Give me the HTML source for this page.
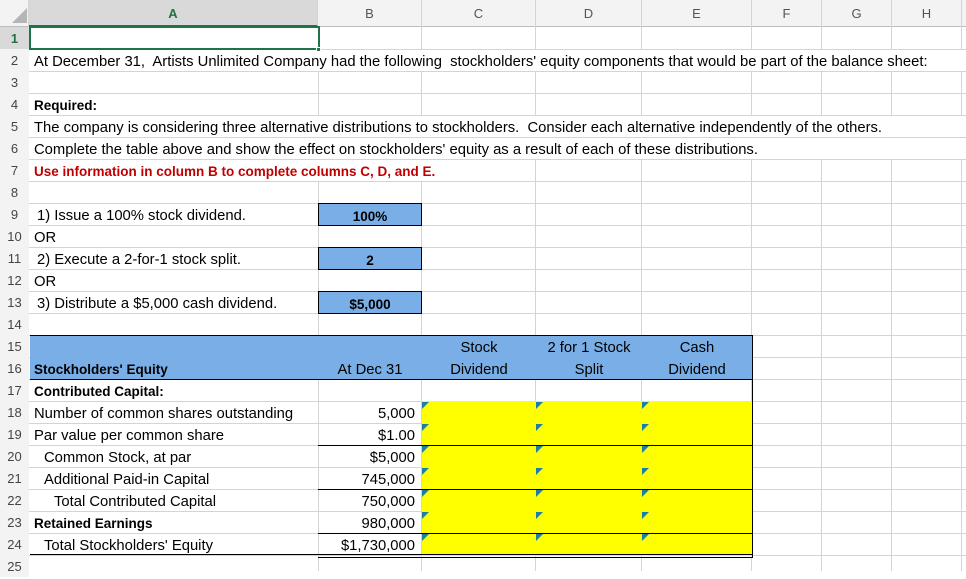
<!DOCTYPE html>
<html><head><meta charset="utf-8"><style>
*{margin:0;padding:0;box-sizing:border-box}
body{width:966px;height:571px;overflow:hidden;background:#fff;position:relative;font-family:"Liberation Sans",sans-serif;font-size:14.8px;color:#000}
.a{position:absolute}
.hl{position:absolute;left:29px;width:937px;height:1px;background:#d4d4d4}
.vl{position:absolute;top:27px;width:1px;height:544px;background:#d4d4d4}
.rn{position:absolute;left:0;width:29px;height:22px;line-height:24px;text-align:center;color:#444;font-size:13px;background:#f3f3f3}
.ch{position:absolute;top:0;height:27px;line-height:28px;text-align:center;color:#555;font-size:13px;border-right:1px solid #d4d4d4}
.t{position:absolute;height:22px;line-height:26px;white-space:nowrap}
.b{font-weight:bold;font-size:13.5px}
.r{text-align:right}
.c{text-align:center}
.tri{position:absolute;width:0;height:0;border-top:7px solid #1b7fa8;border-right:7px solid transparent}
</style></head><body>
<div class="a" style="left:0;top:0;width:966px;height:27px;background:#f3f3f3;border-bottom:1px solid #bdbdbd"></div>
<div class="a" style="left:0;top:0;width:29px;height:27px;border-right:1px solid #d4d4d4"></div>
<div class="a" style="left:12px;top:8px;width:0;height:0;border-left:15px solid transparent;border-bottom:15px solid #b5b5b5"></div>
<div class="ch" style="left:29px;width:289px;background:#d9d9d9;color:#217346;font-weight:bold;border-bottom:2px solid #217346">A</div>
<div class="ch" style="left:318px;width:104px">B</div>
<div class="ch" style="left:422px;width:114px">C</div>
<div class="ch" style="left:536px;width:106px">D</div>
<div class="ch" style="left:642px;width:110px">E</div>
<div class="ch" style="left:752px;width:70px">F</div>
<div class="ch" style="left:822px;width:70px">G</div>
<div class="ch" style="left:892px;width:70px">H</div>
<div class="a" style="left:0;top:27px;width:29px;height:544px;background:#f3f3f3;border-right:1px solid #bdbdbd"></div>
<div class="vl" style="left:318px"></div><div class="vl" style="left:421px"></div><div class="vl" style="left:535px"></div><div class="vl" style="left:641px"></div><div class="vl" style="left:751px"></div><div class="vl" style="left:821px"></div><div class="vl" style="left:891px"></div><div class="vl" style="left:961px"></div>
<div class="hl" style="top:49px"></div><div class="hl" style="top:71px"></div><div class="hl" style="top:93px"></div><div class="hl" style="top:115px"></div><div class="hl" style="top:137px"></div><div class="hl" style="top:159px"></div><div class="hl" style="top:181px"></div><div class="hl" style="top:203px"></div><div class="hl" style="top:225px"></div><div class="hl" style="top:247px"></div><div class="hl" style="top:269px"></div><div class="hl" style="top:291px"></div><div class="hl" style="top:313px"></div><div class="hl" style="top:335px"></div><div class="hl" style="top:357px"></div><div class="hl" style="top:379px"></div><div class="hl" style="top:401px"></div><div class="hl" style="top:423px"></div><div class="hl" style="top:445px"></div><div class="hl" style="top:467px"></div><div class="hl" style="top:489px"></div><div class="hl" style="top:511px"></div><div class="hl" style="top:533px"></div><div class="hl" style="top:555px"></div>
<div class="a" style="left:30px;top:50px;width:936px;height:21px;background:#fff"></div>
<div class="a" style="left:30px;top:116px;width:936px;height:21px;background:#fff"></div>
<div class="a" style="left:30px;top:138px;width:936px;height:21px;background:#fff"></div>
<div class="a" style="left:30px;top:160px;width:420px;height:21px;background:#fff"></div>
<div class="rn" style="top:27px;background:#d9d9d9;color:#217346;font-weight:bold">1</div>
<div class="rn" style="top:49px">2</div><div class="rn" style="top:71px">3</div><div class="rn" style="top:93px">4</div><div class="rn" style="top:115px">5</div><div class="rn" style="top:137px">6</div><div class="rn" style="top:159px">7</div><div class="rn" style="top:181px">8</div><div class="rn" style="top:203px">9</div><div class="rn" style="top:225px">10</div><div class="rn" style="top:247px">11</div><div class="rn" style="top:269px">12</div><div class="rn" style="top:291px">13</div><div class="rn" style="top:313px">14</div><div class="rn" style="top:335px">15</div><div class="rn" style="top:357px">16</div><div class="rn" style="top:379px">17</div><div class="rn" style="top:401px">18</div><div class="rn" style="top:423px">19</div><div class="rn" style="top:445px">20</div><div class="rn" style="top:467px">21</div><div class="rn" style="top:489px">22</div><div class="rn" style="top:511px">23</div><div class="rn" style="top:533px">24</div><div class="rn" style="top:555px">25</div>
<div class="a" style="left:29px;top:26px;width:291px;height:24px;border:2px solid #217346"></div>
<div class="a" style="left:316px;top:47px;width:5px;height:5px;background:#217346;border:1px solid #fff"></div>
<div class="t" style="left:34px;top:49px">At December 31,&nbsp; Artists Unlimited Company had the following&nbsp; stockholders' equity components that would be part of the balance sheet:</div>
<div class="t b" style="left:34px;top:93px">Required:</div>
<div class="t" style="left:34px;top:115px">The company is considering three alternative distributions to stockholders.&nbsp; Consider each alternative independently of the others.</div>
<div class="t" style="left:34px;top:137px">Complete the table above and show the effect on stockholders' equity as a result of each of these distributions.</div>
<div class="t b" style="left:34px;top:159px;color:#c00000">Use information in column B to complete columns C, D, and E.</div>
<div class="t" style="left:37px;top:203px">1) Issue a 100% stock dividend.</div>
<div class="t" style="left:34px;top:225px">OR</div>
<div class="t" style="left:37px;top:247px">2) Execute a 2-for-1 stock split.</div>
<div class="t" style="left:34px;top:269px">OR</div>
<div class="t" style="left:37px;top:291px">3) Distribute a $5,000 cash dividend.</div>
<div class="a t b c" style="left:318px;top:203px;width:104px;height:23px;background:#7aaee6;border:1px solid #000">100%</div>
<div class="a t b c" style="left:318px;top:247px;width:104px;height:23px;background:#7aaee6;border:1px solid #000">2</div>
<div class="a t b c" style="left:318px;top:291px;width:104px;height:23px;background:#7aaee6;border:1px solid #000">$5,000</div>
<div class="a" style="left:30px;top:335px;width:723px;height:45px;background:#7aaee6;border-top:1px solid #000;border-bottom:1px solid #000;border-right:1px solid #000"></div>
<div class="t b" style="left:34px;top:357px">Stockholders' Equity</div>
<div class="t c" style="left:318px;top:357px;width:104px">At Dec 31</div>
<div class="t c" style="left:422px;top:335px;width:114px">Stock</div>
<div class="t c" style="left:422px;top:357px;width:114px">Dividend</div>
<div class="t c" style="left:536px;top:335px;width:106px">2 for 1 Stock</div>
<div class="t c" style="left:536px;top:357px;width:106px">Split</div>
<div class="t c" style="left:642px;top:335px;width:110px">Cash</div>
<div class="t c" style="left:642px;top:357px;width:110px">Dividend</div>
<div class="a" style="left:752px;top:380px;width:1px;height:177px;background:#000"></div>
<div class="a" style="left:422px;top:401px;width:330px;height:155px;background:#ffff00"></div>
<div class="a" style="left:318px;top:445px;width:435px;height:1px;background:#000"></div>
<div class="a" style="left:318px;top:489px;width:435px;height:1px;background:#000"></div>
<div class="a" style="left:318px;top:533px;width:435px;height:1px;background:#000"></div>
<div class="a" style="left:30px;top:554px;width:723px;height:1px;background:#000"></div>
<div class="a" style="left:318px;top:557px;width:435px;height:1px;background:#000"></div>
<div class="t b" style="left:34px;top:379px">Contributed Capital:</div>
<div class="t" style="left:34px;top:401px">Number of common shares outstanding</div>
<div class="t" style="left:34px;top:423px">Par value per common share</div>
<div class="t" style="left:44px;top:445px">Common Stock, at par</div>
<div class="t" style="left:44px;top:467px">Additional Paid-in Capital</div>
<div class="t" style="left:54px;top:489px">Total Contributed Capital</div>
<div class="t b" style="left:34px;top:511px">Retained Earnings</div>
<div class="t" style="left:44px;top:533px">Total Stockholders' Equity</div>
<div class="t r" style="left:318px;top:401px;width:97px">5,000</div>
<div class="t r" style="left:318px;top:423px;width:97px">$1.00</div>
<div class="t r" style="left:318px;top:445px;width:97px">$5,000</div>
<div class="t r" style="left:318px;top:467px;width:97px">745,000</div>
<div class="t r" style="left:318px;top:489px;width:97px">750,000</div>
<div class="t r" style="left:318px;top:511px;width:97px">980,000</div>
<div class="t r" style="left:318px;top:533px;width:97px">$1,730,000</div>
<div class="tri" style="left:422px;top:402px"></div><div class="tri" style="left:536px;top:402px"></div><div class="tri" style="left:642px;top:402px"></div>
<div class="tri" style="left:422px;top:424px"></div><div class="tri" style="left:536px;top:424px"></div><div class="tri" style="left:642px;top:424px"></div>
<div class="tri" style="left:422px;top:446px"></div><div class="tri" style="left:536px;top:446px"></div><div class="tri" style="left:642px;top:446px"></div>
<div class="tri" style="left:422px;top:468px"></div><div class="tri" style="left:536px;top:468px"></div><div class="tri" style="left:642px;top:468px"></div>
<div class="tri" style="left:422px;top:490px"></div><div class="tri" style="left:536px;top:490px"></div><div class="tri" style="left:642px;top:490px"></div>
<div class="tri" style="left:422px;top:512px"></div><div class="tri" style="left:536px;top:512px"></div><div class="tri" style="left:642px;top:512px"></div>
<div class="tri" style="left:422px;top:534px"></div><div class="tri" style="left:536px;top:534px"></div><div class="tri" style="left:642px;top:534px"></div>
</body></html>
